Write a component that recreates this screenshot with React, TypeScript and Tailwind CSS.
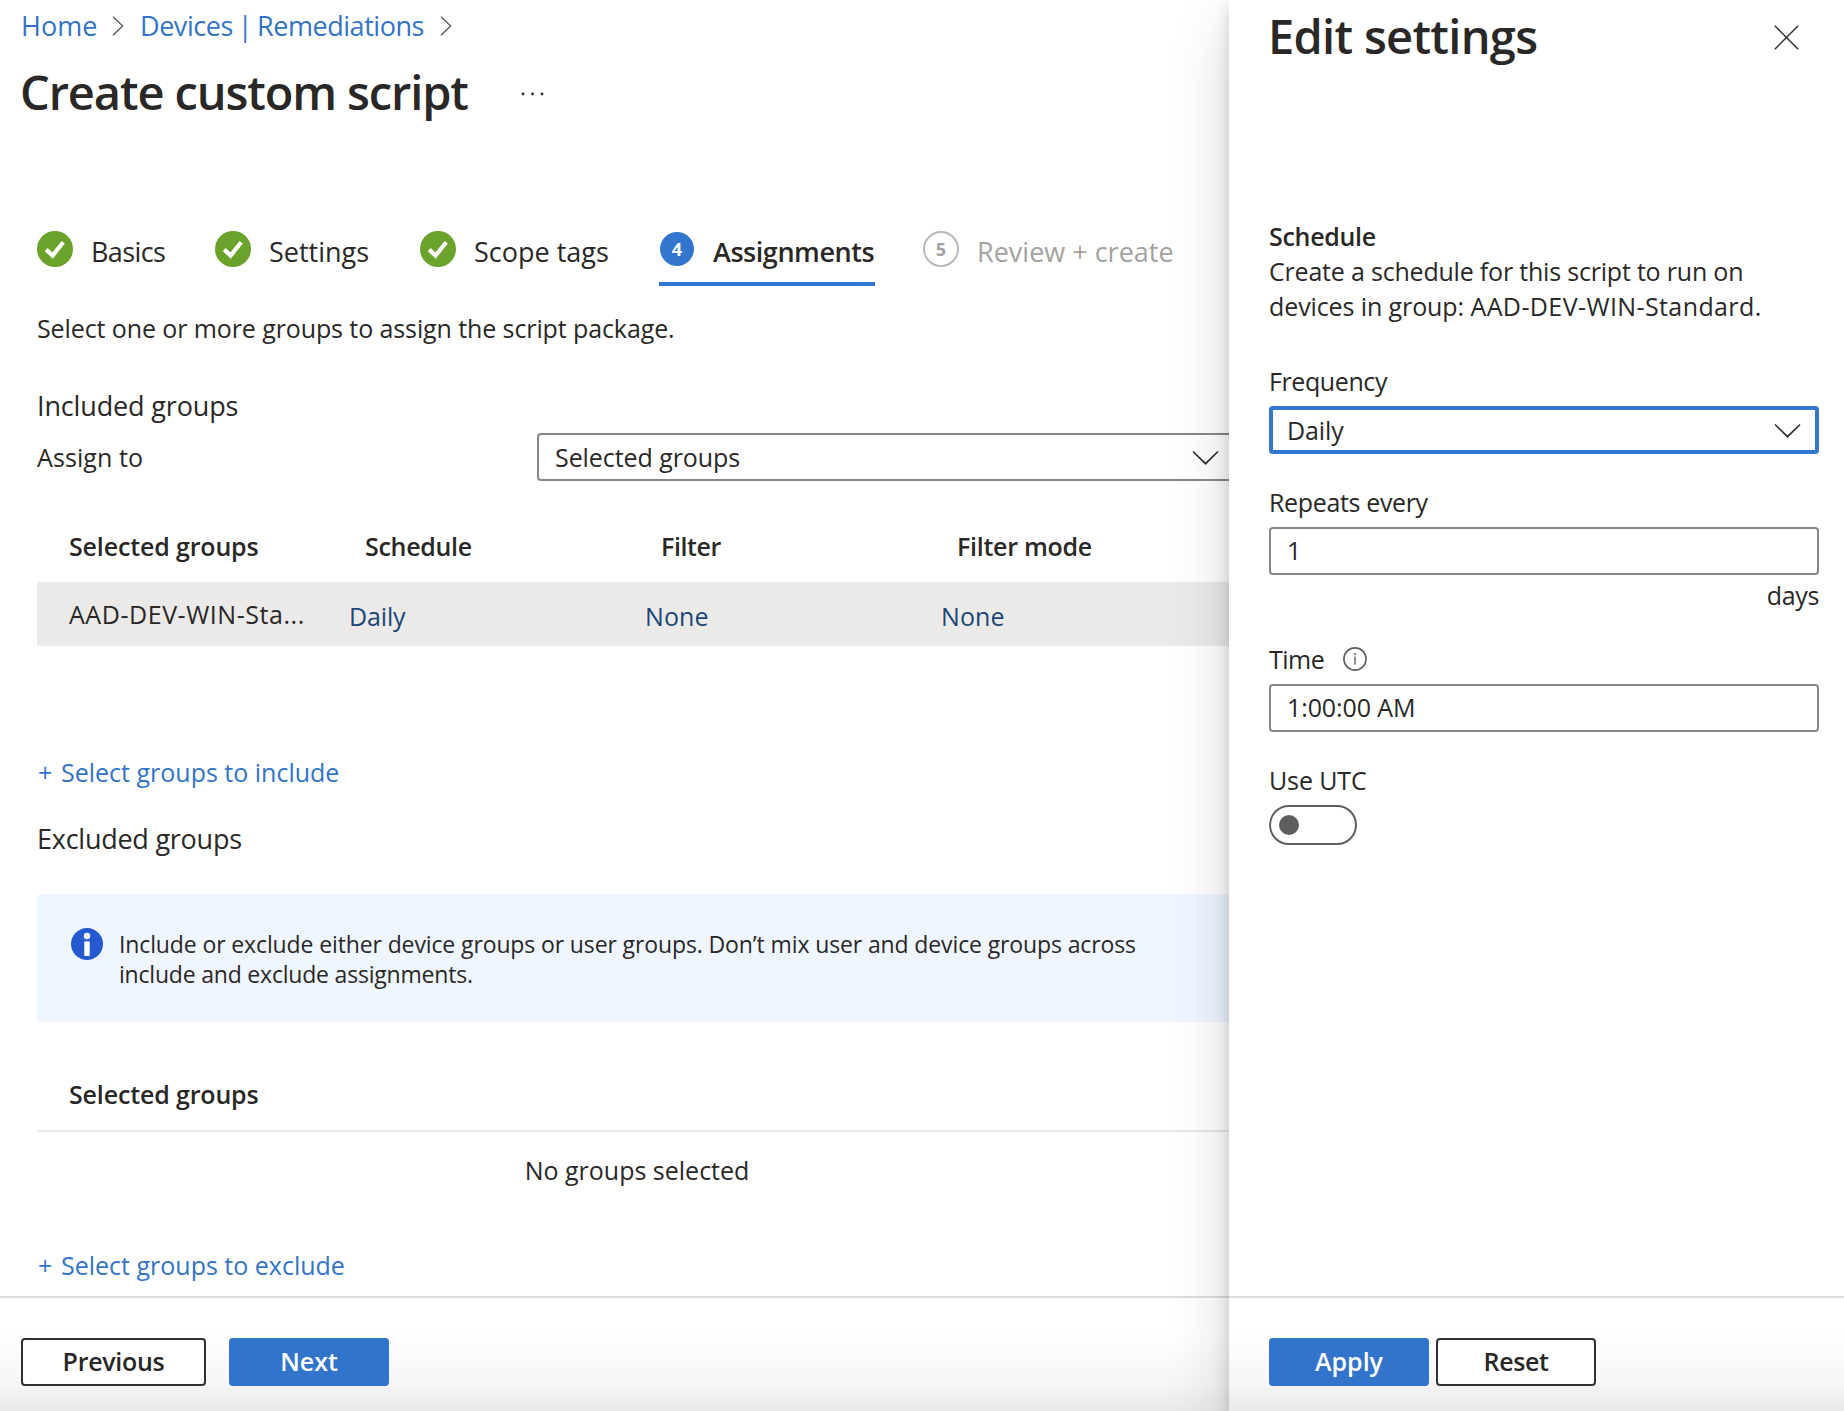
import { useState, type ReactNode } from 'react';

const columns = [
  { label: 'Selected groups', tracking: 'tracking-[-0.15px]' },
  { label: 'Schedule', tracking: 'tracking-[-0.3px]' },
  { label: 'Filter', tracking: 'tracking-[-0.4px]' },
  { label: 'Filter mode', tracking: 'tracking-[-0.28px]' },
];

const CrumbChevron = () => (
  <svg width="12" height="20" viewBox="0 0 12 20" fill="none" stroke="#605e5c" strokeWidth="1.4">
    <path d="M1 0.8 L10.6 10 L1 19.2" />
  </svg>
);

const ChevronDown = () => (
  <svg width="27" height="16" viewBox="0 0 27 16" fill="none" stroke="#323130" strokeWidth="1.7" className="mt-px">
    <path d="M1 1.5 L13.5 13.7 L26 1.5" />
  </svg>
);

const DoneIcon = () => (
  <svg width="36" height="36" viewBox="0 0 36 36" className="shrink-0">
    <circle cx="18" cy="18" r="18" fill="#6aa22c" />
    <path d="M9.2 18.6 L15.6 24.6 L26.2 11.2" fill="none" stroke="#fff" strokeWidth="4.2" />
  </svg>
);

const InfoFilled = () => (
  <svg width="32" height="32" viewBox="0 0 32 32" className="shrink-0">
    <circle cx="16" cy="16" r="16" fill="#2459d0" />
    <circle cx="16" cy="8" r="3.2" fill="#fff" />
    <rect x="13.3" y="13.4" width="5.4" height="14.6" fill="#fff" />
  </svg>
);

const InfoOutline = () => (
  <svg width="24" height="24" viewBox="0 0 24 24">
    <circle cx="12" cy="12" r="11.1" fill="none" stroke="#605e5c" strokeWidth="1.6" />
    <circle cx="12" cy="7" r="1" fill="#605e5c" />
    <rect x="11.3" y="9.6" width="1.4" height="8" fill="#605e5c" />
  </svg>
);

const Step = ({ icon, children }: { icon: ReactNode; children: ReactNode }) => (
  <div className="flex h-[55px] items-start gap-[18px]">
    {icon}
    <span className="mt-[3px] text-[27px] leading-9 whitespace-nowrap">{children}</span>
  </div>
);

const Footer = ({ children }: { children: ReactNode }) => (
  <footer className="h-[115px] shrink-0 border-t-2 border-[#dedede] bg-linear-to-b from-white from-30% via-[#f6f6f6] via-75% to-[#e9e9e9] pt-10">
    {children}
  </footer>
);

const TextBox = ({ children }: { children: ReactNode }) => (
  <div className="mt-[7px] flex h-12 items-center rounded-[4px] border-2 border-[#8a8886] bg-white pb-0.5 pl-4">
    {children}
  </div>
);

const App = () => {
  const [useUtc, setUseUtc] = useState(false);

  return (
    <div className="flex h-[1411px] w-[1844px] overflow-hidden bg-white font-['Open_Sans','Noto_Sans',sans-serif] text-[25px] leading-9 text-[#292827]">
      <main className="flex w-[1229px] shrink-0 flex-col overflow-hidden">
        <div className="flex-1">
          {/* Breadcrumb */}
          <nav className="flex items-center pt-2.5 pl-[21px] text-[27px] leading-8 whitespace-nowrap text-[#3274c8]">
            <a className="w-[91px]">Home</a>
            <CrumbChevron />
            <a className="ml-4 w-[300px] tracking-[-0.45px] [word-spacing:-1.7px]">Devices | Remediations</a>
            <CrumbChevron />
          </nav>

          <div className="mt-5 flex items-center pl-5">
            <h1 className="w-[500px] text-[47px] leading-[60px] font-semibold tracking-[-1.12px]">Create custom script</h1>
            <svg width="26" height="6" viewBox="0 0 26 6" fill="#323130" className="mt-1">
              <circle cx="3" cy="3" r="1.4" />
              <circle cx="12.5" cy="3" r="1.4" />
              <circle cx="22" cy="3" r="1.4" />
            </svg>
          </div>

          {/* Wizard steps */}
          <div className="mt-[109px] flex pl-[37px]">
            <div className="w-[178px]">
              <Step icon={<DoneIcon />}><span className="tracking-[-0.6px]">Basics</span></Step>
            </div>
            <div className="w-[205px]">
              <Step icon={<DoneIcon />}>Settings</Step>
            </div>
            <div className="w-[239px]">
              <Step icon={<DoneIcon />}>Scope tags</Step>
            </div>
            <div className="w-[216px] border-b-4 border-[#3376cd]">
              <div className="flex h-[51px] items-start gap-[19px]">
                <span className="mt-px ml-px flex size-[34px] shrink-0 items-center justify-center rounded-full bg-[#3376cd] text-[18px] font-bold text-white">4</span>
                <span className="mt-[3px] text-[27px] font-semibold tracking-[-0.45px]">Assignments</span>
              </div>
            </div>
            <div className="ml-12 text-[#a3a2a0]">
              <Step
                icon={<span className="flex size-9 shrink-0 items-center justify-center rounded-full border-2 border-[#bab9b8] text-[18px] font-bold">5</span>}
              >
                Review + create
              </Step>
            </div>
          </div>

          <div className="mt-6 box-content w-[1200px] pl-[37px] whitespace-nowrap">
            <p className="tracking-[-0.1px]">Select one or more groups to assign the script package.</p>

            <h2 className="mt-[42px] text-[27px] tracking-[-0.15px]">Included groups</h2>
            <div className="mt-[9px] flex items-center">
              <label className="w-[500px] shrink-0 tracking-[0.1px]">Assign to</label>
              <div className="flex h-12 w-[700px] shrink-0 items-center justify-between rounded-[4px] border-2 border-[#8a8886] px-4">
                <span className="tracking-[-0.07px]">Selected groups</span>
                <ChevronDown />
              </div>
            </div>

            <div className="mt-[29px] flex h-[72px] items-center pl-8 font-semibold">
              {columns.map((col) => (
                <div key={col.label} className="w-[296px] shrink-0">
                  <span className={col.tracking}>{col.label}</span>
                </div>
              ))}
            </div>
            <div className="flex h-16 items-center bg-[#ebeae9] pl-8">
              <span className="w-[280px] tracking-[0.55px]">AAD-DEV-WIN-Sta...</span>
              <a className="w-[296px] pt-1 tracking-[-0.15px] text-[#1b4777]">Daily</a>
              <a className="w-[296px] pt-1 tracking-[0.1px] text-[#1b4777]">None</a>
              <a className="w-[296px] pt-1 tracking-[0.1px] text-[#1b4777]">None</a>
            </div>

            <a className="mt-[108px] flex gap-[7px] pl-px text-[#3274c8]">
              <span className="w-4">+</span>
              <span>Select groups to include</span>
            </a>

            <h2 className="mt-[31px] text-[27px] tracking-[-0.25px]">Excluded groups</h2>
            <div className="mt-[37px] flex h-[128px] items-start gap-4 rounded-[4px] bg-[#f0f6ff] pt-[34px] pl-[34px]">
              <InfoFilled />
              <p className="mt-px text-[23px] leading-[30px] tracking-[-0.12px]">
                Include or exclude either device groups or user groups. Don’t mix user and device groups across
                <br />
                <span className="tracking-[-0.2px]">include and exclude assignments.</span>
              </p>
            </div>

            <div className="mt-9 flex h-[74px] items-center border-b-2 border-[#e8e8e8] pl-8 font-semibold tracking-[-0.15px]">
              Selected groups
            </div>
            <p className="mt-5 text-center">No groups selected</p>

            <a className="mt-[59px] flex gap-[7px] pl-px text-[#3274c8]">
              <span className="w-4">+</span>
              <span>Select groups to exclude</span>
            </a>
          </div>
        </div>

        <Footer>
          <div className="flex gap-[23px] pl-[21px] font-semibold">
            <button className="h-12 w-[185px] rounded-[4px] border-2 border-[#323130] bg-white pb-0.5 tracking-[-0.3px]">Previous</button>
            <button className="h-12 w-40 rounded-[4px] bg-[#3274cb] pb-0.5 text-white">Next</button>
          </div>
        </Footer>
      </main>

      {/* Edit settings panel */}
      <aside className="z-10 flex flex-1 flex-col bg-white shadow-[0_26px_58px_rgba(0,0,0,0.16),0_5px_14px_rgba(0,0,0,0.16)]">
        <div className="flex-1 pr-[25px] pl-10">
          <div className="flex items-center justify-between pt-1.5 pr-5">
            <h1 className="-ml-px text-[47px] leading-[60px] font-semibold tracking-[-0.7px]">Edit settings</h1>
            <svg width="25" height="25" viewBox="0 0 25 25" fill="none" stroke="#323130" strokeWidth="1.5" className="mt-[3px]">
              <path d="M0.8 0.8 L24.2 24.2 M24.2 0.8 L0.8 24.2" />
            </svg>
          </div>

          <div className="mt-[153px] leading-[35px] whitespace-nowrap">
            <h2 className="font-semibold tracking-[-0.3px]">Schedule</h2>
            <p className="tracking-[-0.2px]">Create a schedule for this script to run on</p>
            <p className="tracking-[0.4px]"><span className="tracking-[-0.1px]">devices in group: </span>AAD-DEV-WIN-Standard.</p>
          </div>

          <label className="mt-[39px] block tracking-[-0.4px]">Frequency</label>
          <div className="mt-[7px] flex h-12 items-center justify-between rounded-[4px] border-4 border-[#3376cd] bg-white pr-3.5 pl-3.5">
            <span className="tracking-[-0.1px]">Daily</span>
            <ChevronDown />
          </div>

          <label className="mt-[30px] block tracking-[-0.35px]">Repeats every</label>
          <TextBox>1</TextBox>
          <div className="mt-0.5 text-right tracking-[-0.33px]">days</div>

          <label className="mt-7 flex items-center">
            <span className="w-[74px] tracking-[-0.5px]">Time</span>
            <InfoOutline />
          </label>
          <TextBox><span className="tracking-[-0.1px]">1:00:00 AM</span></TextBox>

          <label className="mt-[30px] block tracking-[-0.13px]">Use UTC</label>
          <button
            role="switch"
            aria-checked={useUtc}
            onClick={() => setUseUtc(!useUtc)}
            className={`mt-[7px] flex h-10 w-[88px] items-center rounded-full border-2 border-[#605e5c] px-2 ${useUtc ? 'justify-end' : 'justify-start'}`}
          >
            <span className="size-5 rounded-full bg-[#605e5c]" />
          </button>
        </div>

        <Footer>
          <div className="flex gap-[7px] pl-10 font-semibold">
            <button className="h-12 w-40 rounded-[4px] bg-[#3274cb] pb-0.5 text-white">Apply</button>
            <button className="h-12 w-40 rounded-[4px] border-2 border-[#323130] bg-white pb-0.5 tracking-[-0.4px]">Reset</button>
          </div>
        </Footer>
      </aside>
    </div>
  );
};

export default App;
